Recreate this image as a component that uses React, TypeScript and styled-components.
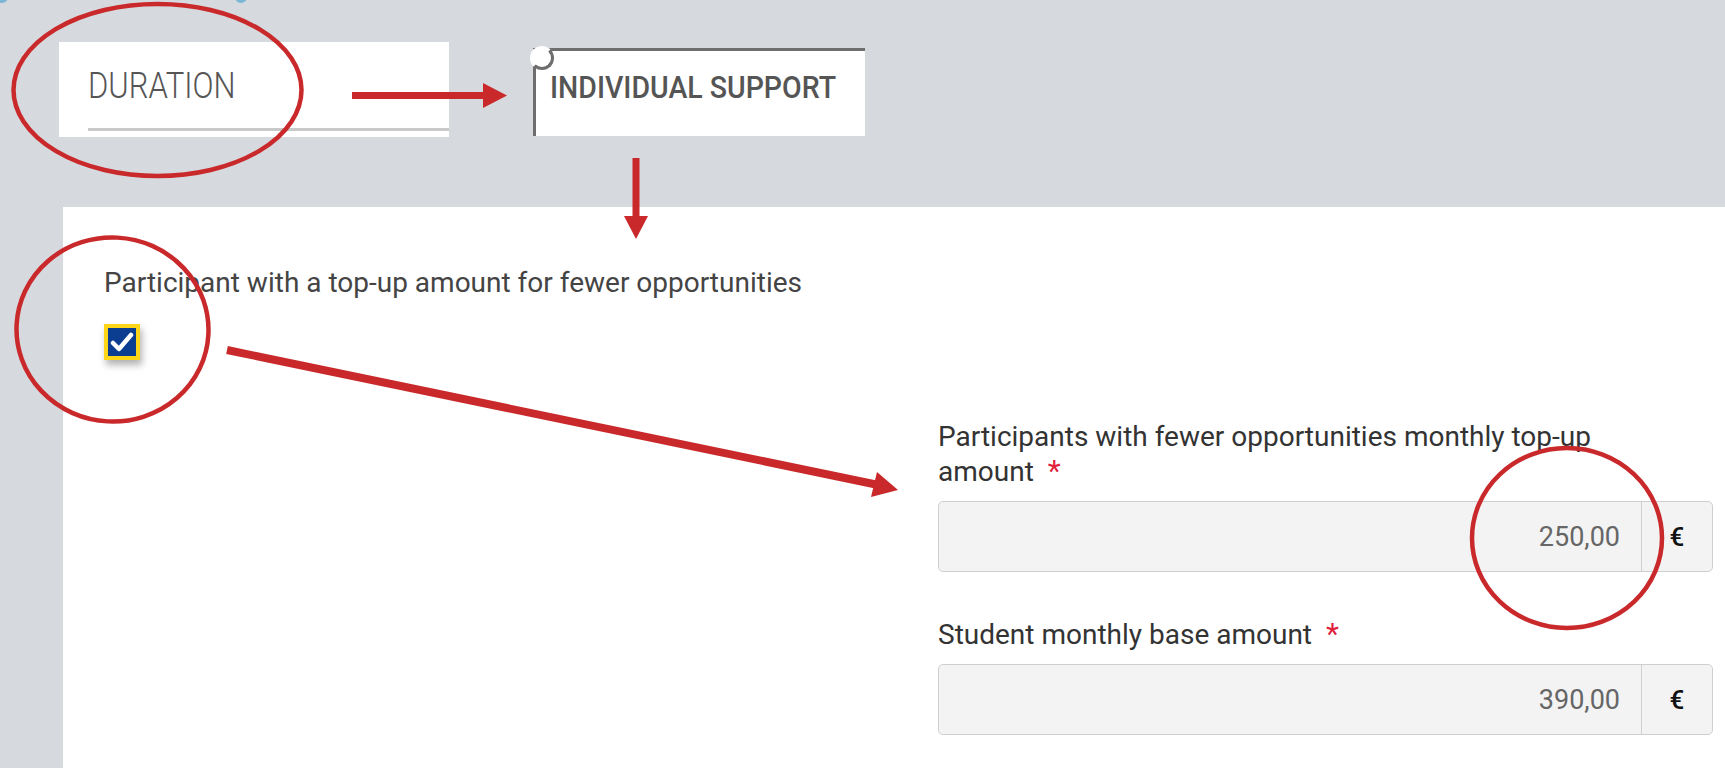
import styled, { createGlobalStyle } from "styled-components";

const GlobalStyle = createGlobalStyle`
  html, body {
    margin: 0;
    padding: 0;
    background: #d6d9de;
  }
  * {
    box-sizing: border-box;
  }
`;

const Page = styled.div`
  position: relative;
  width: 1725px;
  height: 768px;
  overflow: hidden;
  display: flex;
  flex-direction: column;
  background: #d6d9de;
  font-family: Roboto, "Liberation Sans", Arial, sans-serif;
`;

const TabStrip = styled.div`
  height: 207px;
  flex-shrink: 0;
  display: flex;
  align-items: flex-start;
  gap: 84px;
  padding: 42px 0 0 59px;
`;

const DurationTab = styled.div`
  width: 390px;
  height: 95px;
  background: #fff;
  padding-left: 29px;
  display: flex;
  flex-direction: column;
`;

const DurationLabel = styled.span`
  display: block;
  margin-top: 29px;
  font-size: 31px;
  font-weight: 300;
  line-height: 30px;
  color: #555;
  transform: scaleY(1.18);
  transform-origin: left center;
`;

const TabUnderline = styled.div`
  margin-top: 27px;
  height: 3px;
  background: #c9c9c9;
`;

const ActiveTab = styled.div`
  position: relative;
  width: 332px;
  height: 88px;
  margin-top: 6px;
  background: #fff;
  border-top: 3px solid #6e6e6e;
  border-left: 3px solid #6e6e6e;
  padding: 23px 0 0 14px;

  &::before {
    content: "";
    position: absolute;
    top: -5px;
    left: -6px;
    width: 18px;
    height: 18px;
    border-radius: 50%;
    background: #fff;
    border: 3px solid #fff;
    border-right-color: #6e6e6e;
    border-bottom-color: #6e6e6e;
  }
`;

const ActiveTabLabel = styled.span`
  display: block;
  font-size: 28.5px;
  font-weight: 500;
  line-height: 28px;
  color: #555;
  transform: scaleY(1.08);
  transform-origin: left center;
`;

const Panel = styled.div`
  flex: 1;
  margin-left: 63px;
  background: #fff;
  display: flex;
  flex-direction: column;
  padding: 58px 12px 0 41px;
`;

const Text = styled.div`
  font-size: 28px;
  line-height: 36px;
  color: #444;
`;

const Checkbox = styled.div`
  width: 36px;
  height: 36px;
  margin-top: 23px;
  border: 4px solid #ffd617;
  background: #0b3d91;
  display: flex;
  align-items: center;
  justify-content: center;
  box-shadow: 2px 5px 7px rgba(0, 0, 0, 0.3);
`;

const Fields = styled.div`
  align-self: flex-end;
  width: 775px;
  margin-top: 60px;
  display: flex;
  flex-direction: column;
  gap: 45px;
`;

const Field = styled.div`
  display: flex;
  flex-direction: column;
`;

const Label = styled.label`
  max-width: 700px;
  margin-bottom: 12px;
  font-size: 28px;
  line-height: 34px;
  color: #333;
`;

const Required = styled.span`
  margin-left: 14px;
  font-size: 30px;
  color: #e1203b;
`;

const InputGroup = styled.div`
  height: 71px;
  display: flex;
  border: 1px solid #cfcfcf;
  border-radius: 5px;
  background: #f3f3f3;
`;

const Value = styled.div`
  flex: 1;
  display: flex;
  align-items: center;
  justify-content: flex-end;
  padding-right: 21px;
  font-size: 27px;
  color: #666;
`;

const Addon = styled.div`
  width: 71px;
  display: flex;
  align-items: center;
  justify-content: center;
  border-left: 1px solid #cfcfcf;
  font-size: 26px;
  font-weight: 500;
  color: #111;
`;

const Markup = styled.svg`
  position: absolute;
  top: 0;
  left: 0;
  pointer-events: none;
`;

const red = "#c9292b";

const fields = [
  { label: "Participants with fewer opportunities monthly top-up amount", value: "250,00" },
  { label: "Student monthly base amount", value: "390,00" },
];

const App = () => {
  return (
    <Page>
      <GlobalStyle />
      <TabStrip>
        <DurationTab>
          <DurationLabel>DURATION</DurationLabel>
          <TabUnderline />
        </DurationTab>
        <ActiveTab>
          <ActiveTabLabel>INDIVIDUAL SUPPORT</ActiveTabLabel>
        </ActiveTab>
      </TabStrip>

      <Panel>
        <Text>Participant with a top-up amount for fewer opportunities</Text>
        <Checkbox>
          <svg width="24" height="22" viewBox="0 0 24 22">
            <path d="M3 12 L9 18 L21 4" fill="none" stroke="#fff" strokeWidth="4.5" strokeLinecap="round" strokeLinejoin="round" />
          </svg>
        </Checkbox>

        <Fields>
          {fields.map((f, i) => (
            <Field key={i}>
              <Label>
                {f.label}
                <Required>*</Required>
              </Label>
              <InputGroup>
                <Value>{f.value}</Value>
                <Addon>€</Addon>
              </InputGroup>
            </Field>
          ))}
        </Fields>
      </Panel>

      {/* red annotation marks drawn over the form */}
      <Markup width="1725" height="768" viewBox="0 0 1725 768">
        <circle cx="2" cy="-3" r="6" fill="#7db7d6" />
        <circle cx="241" cy="-3" r="6" fill="#7db7d6" />

        <ellipse cx="157.5" cy="90" rx="144" ry="86" fill="none" stroke={red} strokeWidth="4.5" />
        <ellipse cx="112.5" cy="329.5" rx="96" ry="92" fill="none" stroke={red} strokeWidth="4.5" transform="rotate(3 112.5 329.5)" />
        <ellipse cx="1567" cy="538" rx="95" ry="90" fill="none" stroke={red} strokeWidth="4.5" />

        <rect x="352" y="92" width="132" height="7" fill={red} />
        <polygon points="483,83 507,95.5 483,108" fill={red} />

        <rect x="632.5" y="158" width="7" height="59" fill={red} />
        <polygon points="624,216 648,216 636,239" fill={red} />

        <line x1="227" y1="350" x2="876" y2="484.5" stroke={red} strokeWidth="8" />
        <polygon points="877,472 898,490 871,497" fill={red} />
      </Markup>
    </Page>
  );
};

export default App;
